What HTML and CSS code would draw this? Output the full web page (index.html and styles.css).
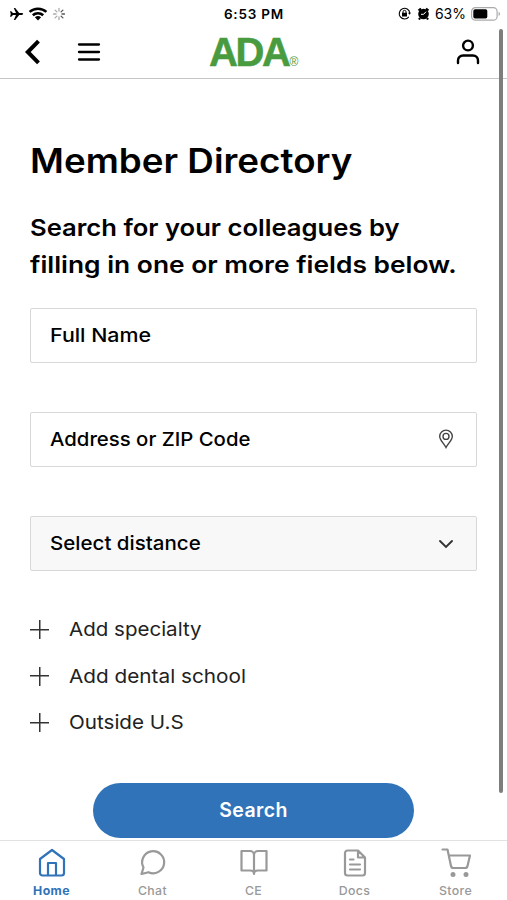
FILE: index.html
```html
<!DOCTYPE html>
<html lang="en">
<head>
<meta charset="utf-8">
<meta name="viewport" content="width=device-width">
<title>Member Directory</title>
<link rel="stylesheet" href="styles.css">
</head>
<body>
<div class="app">
  <div class="status">
    <div class="status-left">
      <svg width="15" height="14" viewBox="0 0 15 14"><path d="M1 4.2h1.2L4 6.1h3L4.8 1h1.4l4 5.1h2.6c1.9 0 1.9 1.8 0 1.8h-2.6l-4 5.1H4.8L7 7.9H4L2.2 9.8H1l.8-2.8z"/></svg>
      <svg width="20" height="14" viewBox="0 0 20 14"><g fill="none" stroke="#000" stroke-width="2.6"><path d="M1.6 4.9C6.3.6 13.7.6 18.4 4.9"/><path d="M4.8 8.2C7.8 5.5 12.2 5.5 15.2 8.2"/></g><path d="M6.9 10.3q3.1-2.5 6.2 0L10 13.5z"/></svg>
      <svg width="14" height="14" viewBox="0 0 14 14" fill="none" stroke-width="1.3" stroke-linecap="round"><path stroke="#aaa" d="M7 1.5V4M3.1 3.1l1.8 1.8M1.5 7H4M3.1 10.9l1.8-1.8M7 12.5V10"/><path stroke="#555" d="M10.9 10.9L9.1 9.1M12.5 7H10M10.9 3.1L9.1 4.9"/></svg>
    </div>
    <div class="time">6:53 PM</div>
    <div class="status-right">
      <svg width="13" height="13" viewBox="0 0 13 13"><path d="M10.8 9.8A5.3 5.3 0 1 1 11.8 6" fill="none" stroke="#000" stroke-width="1.1"/><path d="M10 5.8h3l-1.5 2zM4 5.7h5v3.7H4z"/><path d="M5 6V4.8a1.5 1.5 0 0 1 3 0V6" fill="none" stroke="#000"/></svg>
      <svg class="alarm" width="13" height="13" viewBox="0 0 13 13"><circle cx="6.5" cy="7" r="5.3"/><path d="M1.5 3.5l2.5-2M11.5 3.5L9 1.5M3 11l-1 1.5M10 11l1 1.5" stroke="#000" stroke-width="2.2"/><path d="M9 4.7L6.7 7.3H4" fill="none" stroke="#fff"/></svg>
      <span class="percent">63%</span>
      <svg width="30" height="14" viewBox="0 0 30 14"><rect x=".6" y=".6" width="25.5" height="12.6" rx="3.8" fill="none" stroke="#aaa" stroke-width="1.2"/><rect x="2.3" y="2.3" width="14" height="9.2" rx="1.8"/><path d="M27.6 4.8q3 2.1 0 4.2z" fill="#aaa"/></svg>
    </div>
  </div>
  <header class="header">
    <svg class="back" width="18" height="28" viewBox="0 0 18 28"><path d="M16.5 3.2L5.8 14l10.7 10.8" fill="none" stroke="#000" stroke-width="4"/></svg>
    <svg class="menu" width="24" height="20" viewBox="0 0 24 20"><path d="M2 2.5h20M2 10h20M2 17.5h20" stroke="#000" stroke-width="2.3" stroke-linecap="round"/></svg>
    <div class="logo"><span class="ada">ADA</span><span class="reg">®</span></div>
    <svg class="user" width="24" height="26" viewBox="0 0 24 26" fill="none" stroke="#000" stroke-width="2.4" stroke-linecap="round"><circle cx="12" cy="6.5" r="4.9"/><path d="M2 24v-2.5a5 5 0 0 1 5-5h10a5 5 0 0 1 5 5V24"/></svg>
  </header>
  <main class="content">
    <h1><span class="wide t-title">Member Directory</span></h1>
    <p class="lead"><span class="wide t-lead1">Search for your colleagues by</span><br><span class="wide t-lead2">filling in one or more fields below.</span></p>
    <div class="field"><span class="wide t-name">Full Name</span></div>
    <div class="field"><span class="wide t-address">Address or ZIP Code</span>
      <svg width="16" height="20" viewBox="0 0 16 20" fill="none" stroke="#444" stroke-width="1.4"><path d="M8 18.5C6 14.5 1.7 11 1.7 7.4a6.3 6.3 0 0 1 12.6 0c0 3.6-4.3 7.1-6.3 11.1z"/><circle cx="8" cy="7.4" r="3"/></svg>
    </div>
    <div class="field select"><span class="wide t-distance">Select distance</span>
      <svg width="16" height="12" viewBox="0 0 16 12"><path d="M2 4l6 6 6-6" fill="none" stroke="#333" stroke-width="1.9" stroke-linecap="round"/></svg>
    </div>
    <div class="extras">
      <div class="extra"><i class="plus"></i><span class="wide t-specialty">Add specialty</span></div>
      <div class="extra"><i class="plus"></i><span class="wide t-school">Add dental school</span></div>
      <div class="extra"><i class="plus"></i><span class="wide t-outside">Outside U.S</span></div>
    </div>
    <div class="search"><span class="t-search">Search</span></div>
  </main>
  <nav class="tabs">
    <div class="tab active"><svg width="30" height="30" viewBox="0 0 30 30"><path d="M3 11L15 2l12 9v14a2.5 2.5 0 0 1-2.5 2.5h-19A2.5 2.5 0 0 1 3 25zM11 27V15h8v12"/></svg><span>Home</span></div>
    <div class="tab"><svg width="30" height="30" viewBox="0 0 30 30"><path d="M3.5 26l2-6.5a11 11 0 1 1 5 4.7z"/></svg><span>Chat</span></div>
    <div class="tab"><svg width="30" height="30" viewBox="0 0 30 30"><path d="M15 26V7a4 4 0 0 0-4-4H2.5v19.5H11q4 0 4 3.5 0-3.5 4-3.5h8.5V3H19a4 4 0 0 0-4 4"/></svg><span>CE</span></div>
    <div class="tab"><svg width="30" height="30" viewBox="0 0 30 30"><path d="M18 2.5H7.5A2.5 2.5 0 0 0 5 5v20a2.5 2.5 0 0 0 2.5 2.5h15A2.5 2.5 0 0 0 25 25V9.500zM18 2.500v7h7M10 11.500h3.500M10 16.500h10M10 21.500h10"/></svg><span>Docs</span></div>
    <div class="tab"><svg width="30" height="30" viewBox="0 0 30 30"><path d="M1.5 1.5h5l3.5 16.5a2.5 2.5 0 0 0 2.5 2h11.5a2.500 2.500 0 0 0 2.500-2l2.500-10.500H8"/><g fill="currentColor"><circle cx="12" cy="26.500" r="1.400"/><circle cx="25" cy="26.500" r="1.400"/></g></svg><span>Store</span></div>
  </nav>
  <div class="scrollbar"></div>
</div>
</body>
</html>
```
FILE: styles.css
```css
* { box-sizing: border-box; }
body { margin: 0; background: #fff; color: #000; font-family: Inter, "Liberation Sans", sans-serif; }
svg { display: block; flex: none; }
.app { width: 507px; height: 900px; display: flex; flex-direction: column; position: relative; overflow: hidden; }
.status { height: 27px; display: grid; grid-template-columns: 1fr auto 1fr; align-items: center; flex: none; padding: 0 6px 0 9px; }
.status-left, .status-right { display: flex; align-items: center; }
.status-left { gap: 4px; }
.status-right { justify-content: flex-end; gap: 5px; }
.alarm { margin-left: 1px; }
.time { font-size: 13.5px; font-weight: 600; letter-spacing: .8px; margin-right: 2px; }
.percent { font-size: 14px; }
.header { height: 52px; flex: none; display: flex; align-items: center; border-bottom: 1.5px solid #c5c5c5; padding: 0 27px 2px 22px; }
.menu { margin-left: 37px; }
.logo { margin-left: 108px; display: flex; align-items: flex-end; color: #489b3e; line-height: 1; }
.ada { font-family: "Liberation Sans", sans-serif; font-size: 40px; font-weight: 700; letter-spacing: -2.4px; -webkit-text-stroke: .5px #489b3e; }
.reg { font-family: "Liberation Sans", sans-serif; font-size: 12px; margin: 0 0 4px 1px; }
.user { margin-left: auto; }
.content { flex: 1; padding: 60px 30px 0; min-height: 0; }
h1 { margin: 0 0 27px; font-size: 33.5px; line-height: 44px; font-weight: 600; white-space: nowrap; }
.lead { margin: 0 0 24.5px; font-size: 23.5px; line-height: 36.5px; font-weight: 600; white-space: nowrap; }
.field { height: 55px; margin-bottom: 49px; border: 1.5px solid #d8d8d8; border-radius: 2px; padding: 0 22px 0 19px; display: flex; align-items: center; justify-content: space-between; font-size: 19px; font-weight: 500; }
.select { background: #f8f8f8; margin-bottom: 36px; }
.extra { height: 46.4px; display: flex; align-items: center; gap: 20px; font-size: 19px; color: #222; }
.plus { width: 19px; height: 19px; background: linear-gradient(#333, #333) center / 19px 1.5px no-repeat, linear-gradient(#333, #333) center / 1.5px 19px no-repeat; }
.search { width: 321px; height: 55px; margin: 37px auto 0; border-radius: 28px; background: #3073b8; color: #fff; display: flex; align-items: center; justify-content: center; font-size: 19.5px; font-weight: 600; }
.wide { display: inline-block; transform-origin: 0 50%; }
.t-title { transform: scaleX(1.098); }
.t-lead1 { transform: scaleX(1.09); }
.t-lead2 { transform: scaleX(1.121); }
.t-name { transform: scaleX(1.125); }
.t-address { transform: scaleX(1.07); }
.t-distance { transform: scaleX(1.08); }
.t-specialty { transform: scaleX(1.08); }
.t-school { transform: scaleX(1.092); }
.t-outside { transform: scaleX(1.085); }
.t-search { letter-spacing: .4px; }
.tabs { height: 60px; flex: none; border-top: 1px solid #e2e2e2; display: grid; grid-template-columns: repeat(5, 101px); justify-content: center; color: #999; }
.tab { display: flex; flex-direction: column; align-items: center; padding-top: 7px; font-size: 12.3px; font-weight: 500; line-height: 16px; gap: 5px; letter-spacing: .4px; }
.tab svg { fill: none; stroke: currentColor; stroke-width: 2.2; stroke-linecap: round; stroke-linejoin: round; }
.active { color: #3073b8; font-weight: 700; }
.scrollbar { position: absolute; left: 499px; top: 29px; width: 4px; height: 764px; border-radius: 2px; background: #7d7d7d; }
```
